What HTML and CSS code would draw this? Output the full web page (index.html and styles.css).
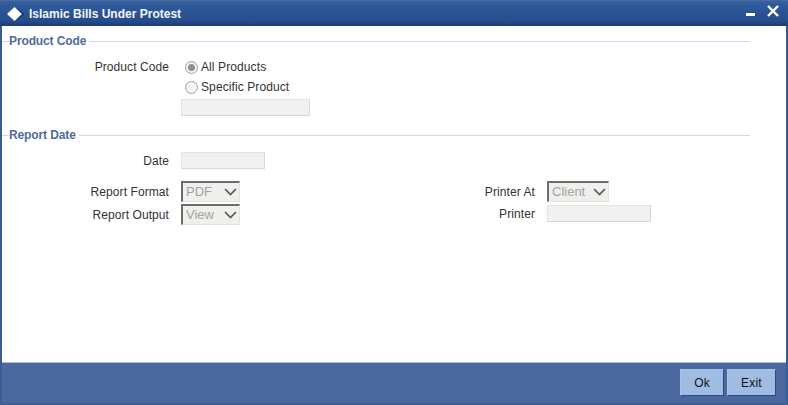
FILE: index.html
```html
<!DOCTYPE html>
<html lang="en">
<head>
<meta charset="utf-8">
<title>Islamic Bills Under Protest</title>
<link rel="stylesheet" href="styles.css">
</head>
<body>
<div class="window">
  <header class="titlebar">
    <svg class="logo" width="18" height="14" viewBox="0 0 18 14"><path d="M10.5 0.5 L18 7 L10.5 13.5 L15 7 Z" fill="#0f2a55"/><path d="M8.5 0 L16 7 L8.5 14 L1 7 Z" fill="#fff"/></svg>
    <h1 class="title">Islamic Bills Under Protest</h1>
    <div class="controls">
      <svg class="min" width="9" height="3" viewBox="0 0 9 3"><rect width="9" height="3" fill="#fff"/></svg>
      <svg class="close" width="12" height="12" viewBox="0 0 12 12"><path d="M1 1 L11 11 M11 1 L1 11" stroke="#fff" stroke-width="2.4"/></svg>
    </div>
  </header>
  <main class="content">
    <section class="section section-product">
      <div class="legend"><span class="legend-text">Product Code</span></div>
      <div class="form-row top">
        <span class="label">Product Code</span>
        <div class="radios">
          <label class="radio-row"><input class="radio checked" type="radio" name="p" checked disabled>All Products</label>
          <label class="radio-row"><input class="radio" type="radio" name="p" disabled>Specific Product</label>
          <input class="field field-product" type="text" disabled>
        </div>
      </div>
    </section>
    <section class="section section-date">
      <div class="legend"><span class="legend-text">Report Date</span></div>
      <div class="form-row date-row">
        <span class="label">Date</span>
        <input class="field field-date" type="text" disabled>
      </div>
      <div class="columns">
        <div class="column">
          <div class="form-row select-row">
            <span class="label">Report Format</span>
            <div class="select"><span>PDF</span><svg width="13" height="8" viewBox="0 0 13 8"><path d="M1 1 L6.5 6.5 L12 1" fill="none" stroke="#55585c" stroke-width="1.7"/></svg></div>
          </div>
          <div class="form-row select-row">
            <span class="label">Report Output</span>
            <div class="select"><span>View</span><svg width="13" height="8" viewBox="0 0 13 8"><path d="M1 1 L6.5 6.5 L12 1" fill="none" stroke="#55585c" stroke-width="1.7"/></svg></div>
          </div>
        </div>
        <div class="column column-right">
          <div class="form-row select-row">
            <span class="label">Printer At</span>
            <div class="select select-wide"><span>Client</span><svg width="13" height="8" viewBox="0 0 13 8"><path d="M1 1 L6.5 6.5 L12 1" fill="none" stroke="#55585c" stroke-width="1.7"/></svg></div>
          </div>
          <div class="form-row printer-row">
            <span class="label">Printer</span>
            <input class="field field-printer" type="text" disabled>
          </div>
        </div>
      </div>
    </section>
  </main>
  <footer class="footer">
    <button class="btn" type="button">Ok</button>
    <button class="btn btn-exit" type="button">Exit</button>
  </footer>
</div>
</body>
</html>
```
FILE: styles.css
```css
* { box-sizing: border-box; }
html, body { margin: 0; padding: 0; }
body {
  width: 788px;
  height: 405px;
  overflow: hidden;
  font-family: "Liberation Sans", Arial, sans-serif;
  font-size: 12px;
  color: #333;
}
.window {
  width: 788px;
  height: 405px;
  display: flex;
  flex-direction: column;
  background: #3f6098;
  border-left: 2px solid #3a5c94;
  border-right: 2px solid #3a5c94;
  border-bottom: 2px solid #3f5f92;
}
.titlebar {
  height: 26px;
  flex: none;
  display: flex;
  align-items: center;
  margin: 0 -2px;
  padding: 0 0 0 5px;
  background: linear-gradient(#37619f 0, #2f5a9b 4px, #264c8b 20px, #1f3f78 24px, #14305f 26px);
  border-top: 1px solid #4a6a9c;
}
.logo { flex: none; margin-left: 1px; }
.title {
  margin: 0 0 0 5px;
  font-size: 12px;
  font-weight: bold;
  color: #f2f5fa;
}
.controls {
  margin-left: auto;
  display: flex;
  align-items: flex-start;
  gap: 12px;
  padding-right: 9px;
  height: 100%;
}
.min { margin-top: 12px; }
.close { margin-top: 4px; }
.content {
  flex: 1;
  min-height: 0;
  background: #fff;
  padding-top: 8px;
}
.legend {
  height: 14px;
  display: flex;
  align-items: center;
  margin-right: 36px;
  background: linear-gradient(#d0d9e3, #d0d9e3) 0 7px / 100% 1px no-repeat;
}
.legend-text {
  margin-left: 7px;
  padding-right: 3px;
  background: #fff;
  font-weight: bold;
  color: #4f6c9b;
  line-height: 14px;
  letter-spacing: -0.12px;
}
.section-date { margin-top: 12px; }
.form-row { display: flex; }
.label {
  width: 167px;
  flex: none;
  text-align: right;
  line-height: 14px;
  letter-spacing: 0.08px;
}
.top { margin-top: 12px; }
.radios {
  margin-left: 12px;
  display: flex;
  flex-direction: column;
  align-items: flex-start;
}
.radio-row {
  height: 20px;
  display: flex;
  align-items: center;
  margin-left: 4px;
  line-height: 14px;
  letter-spacing: 0.1px;
  margin-top: -3px;
  margin-bottom: 3px;
}
.radio {
  appearance: none;
  width: 13px;
  height: 13px;
  margin: 0 3px 0 0;
  border: 1px solid #a0a3a6;
  border-radius: 50%;
  background: #f4f4f4;
}
.radio.checked {
  background: radial-gradient(circle, #8f8f8f 0 3px, #f0f0f0 4px);
}
.field {
  display: block;
  height: 17px;
  margin: 0;
  padding: 0;
  background: #f1f1f1;
  border: 1px solid #e4e4e4;
  border-bottom-color: #d8d8d8;
  border-right-color: #d8d8d8;
}
.field-product { width: 129px; margin-top: -1px; }
.field-date { width: 84px; margin-left: 12px; }
.field-printer { width: 104px; margin-left: 12px; }
.date-row { margin-top: 10px; align-items: center; }
.columns { display: flex; margin-top: 11px; }
.column { width: 365px; flex: none; }
.select-row { height: 23px; align-items: center; }
.printer-row { height: 17px; margin-top: 2px; align-items: center; }
.column-right .label { width: 168px; }
.select {
  width: 59px;
  height: 21px;
  margin-left: 12px;
  padding: 0 2px 1px 3px;
  display: flex;
  align-items: center;
  justify-content: space-between;
  background: #f0efeb;
  border-top: 2px solid #6c6c6c;
  border-left: 2px solid #6c6c6c;
  border-right: 1px solid #e4e3df;
  border-bottom: 1px solid #e4e3df;
  font-size: 13px;
  color: #a3a3a3;
}
.select-wide { width: 62px; }
.footer {
  height: 41px;
  flex: none;
  display: flex;
  justify-content: flex-end;
  gap: 3px;
  padding: 6px 10px 0 0;
  background: #4a689e;
  border-top: 1px solid #a9bcd9;
}
.btn {
  width: 44px;
  height: 27px;
  margin: 0;
  padding: 0;
  font: 12px "Liberation Sans", Arial, sans-serif;
  letter-spacing: 0.2px;
  color: #111;
  background: #9fbde2;
  border: 1px solid #a9c4e6;
  border-right-color: #2f4a78;
  border-bottom-color: #2f4a78;
}
.btn-exit { width: 49px; }
```
